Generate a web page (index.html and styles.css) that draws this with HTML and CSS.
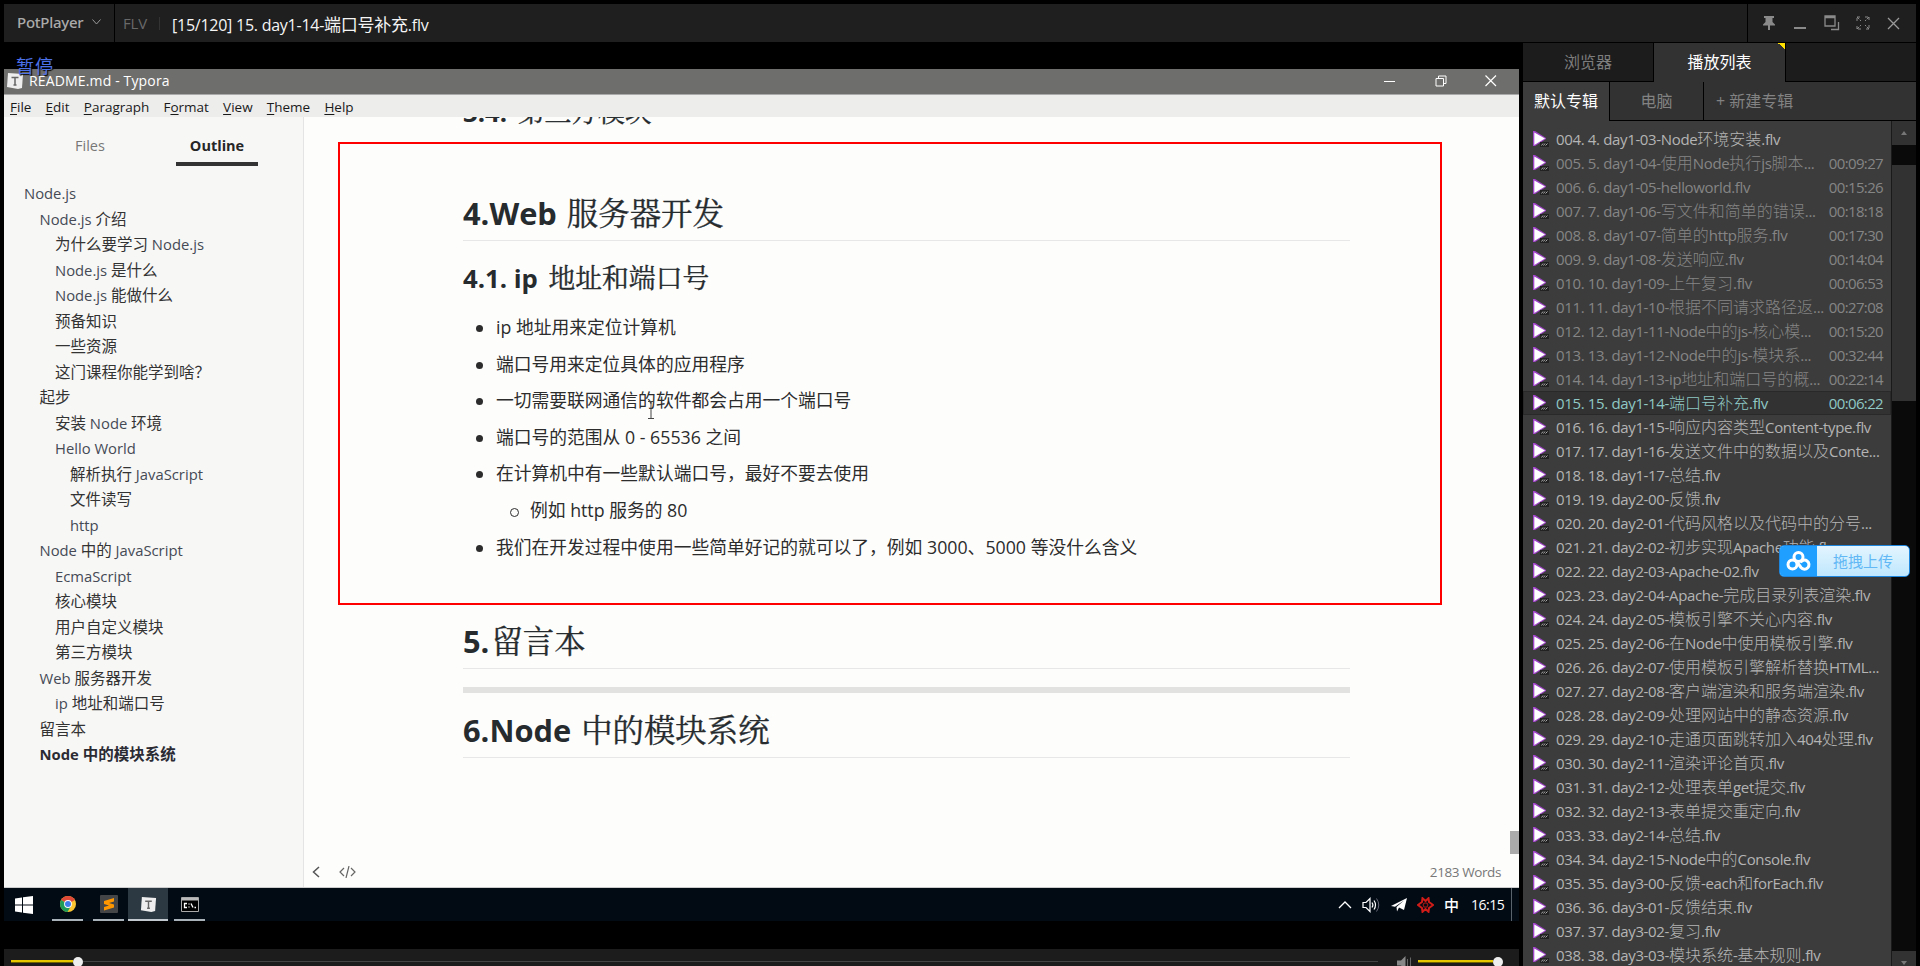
FILE: index.html
```
<!DOCTYPE html>
<html lang="zh-CN">
<head>
<meta charset="utf-8">
<title>PotPlayer</title>
<link rel="stylesheet" href="styles.css">
</head>
<body>
<svg class="defs" width="0" height="0">
  <defs>
    <symbol id="flv" viewBox="0 0 16 16">
      <path d="M0 0H2L13 7V8L2 15H0Z" fill="#a044c8"/>
      <path d="M1.300 1.500L12 7.500L1.300 14Z" fill="#fff"/>
      <path d="M7 11H16V16H7Z" fill="#222"/>
      <path d="M8.500 14.500L10 12.500M10.500 14.500L12 12.500M12.500 14.500L14.500 12.500" stroke="#aaa" fill="none"/>
    </symbol>
    <symbol id="typora" viewBox="0 0 18 18">
      <path d="M2 1L17 2L16 16L12 17L1 15Z" fill="#eee"/>
      <path d="M5.500 5.500H12.500M9 5.500V13M7.500 13H10.500" stroke="#666" stroke-width="1.500" fill="none"/>
    </symbol>
  </defs>
</svg>
<div class="player">
  <header class="titlebar">
    <div class="brand">PotPlayer<svg width="9" height="6" viewBox="0 0 9 6"><path d="M.5.5L4.500 5L8.500.5" fill="none" stroke="#999"/></svg></div>
    <div class="caption"><span class="format">FLV</span><i class="sep"></i><span class="file">[15/120] 15. day1-14-<b class="han">端口号补充</b>.flv</span></div>
    <div class="window-buttons">
      <svg width="14" height="16" viewBox="0 0 14 16"><path d="M2 1H12V3H10.500V7L13 9.500V10.500H8V15H6V10.500H1V9.500L3.500 7V3H2Z" fill="#8a8a8a"/></svg>
      <svg width="14" height="16" viewBox="0 0 14 16"><path d="M1 12H13V14H1Z" fill="#8a8a8a"/></svg>
      <svg width="16" height="16" viewBox="0 0 16 16"><path d="M1 1H11V11H1ZM1 2.500H11M14.500 7V14.500H7" fill="none" stroke="#8a8a8a" stroke-width="1.300"/></svg>
      <svg width="14" height="14" viewBox="0 0 14 14"><path d="M1 5V1H5M1 1L5 5M9 1H13V5M13 1L9 5M13 9V13H9M13 13L9 9M5 13H1V9M1 13L5 9" fill="none" stroke="#8a8a8a" stroke-dasharray="3 1"/></svg>
      <svg width="13" height="13" viewBox="0 0 13 13"><path d="M1 1L12 12M12 1L1 12" fill="none" stroke="#999" stroke-width="1.300"/></svg>
    </div>
  </header>
  <div class="body">
    <main class="stage">
      <div class="osd">暂停</div>
      <section class="video">
        <div class="app-title">
          <svg class="app-icon" width="18" height="18"><use href="#typora"/></svg>
          <span class="app-name">README.md - Typora</span>
          <div class="app-buttons">
            <svg width="12" height="12"><path d="M0 6.500H11" stroke="#fff"/></svg>
            <svg width="12" height="12"><path d="M1 3.500H8.500V11H1ZM3.500 3V1H11V8.500H9" fill="none" stroke="#fff"/></svg>
            <svg width="12" height="12"><path d="M.5.5L11 11M11 .5L.5 11" stroke="#fff" stroke-width="1.200"/></svg>
          </div>
        </div>
        <nav class="menu"><span><u>F</u>ile</span><span><u>E</u>dit</span><span><u>P</u>aragraph</span><span>F<u>o</u>rmat</span><span><u>V</u>iew</span><span><u>T</u>heme</span><span><u>H</u>elp</span></nav>
        <div class="work">
          <aside class="outline">
            <div class="outline-tabs"><span class="o-tab">Files</span><span class="o-tab o-active">Outline</span></div>
            <ul class="tree" id="tree"></ul>
          </aside>
          <article class="editor">
            <div class="doc">
              <h3 class="cut">3.4. <b class="han">第三方模块</b></h3>
              <h2 class="first">4.Web <b class="han">服务器开发</b></h2>
              <h3>4.1. ip <b class="han">地址和端口号</b></h3>
              <ul class="points">
                <li>ip 地址用来定位计算机</li>
                <li>端口号用来定位具体的应用程序</li>
                <li>一切需要联网通信的软件都会占用一个端口号</li>
                <li>端口号的范围从 0 - 65536 之间</li>
                <li>在计算机中有一些默认端口号，最好不要去使用</li>
                <li class="sub">例如 http 服务的 80</li>
                <li>我们在开发过程中使用一些简单好记的就可以了，例如 3000、5000 等没什么含义</li>
              </ul>
              <h2 class="second">5.<b class="han">留言本</b></h2>
              <hr>
              <h2 class="third">6.Node <b class="han">中的模块系统</b></h2>
            </div>
            <footer class="status">
              <svg width="8" height="12"><path d="M7 1L1.500 6L7 11" fill="none" stroke="#555" stroke-width="1.500"/></svg>
              <svg width="17" height="12"><path d="M5 2L1 6L5 10M12 2L16 6L12 10M10 0L7 12" fill="none" stroke="#666" stroke-width="1.200"/></svg>
              <span class="words">2183 Words</span>
            </footer>
            <i class="doc-thumb"></i>
            <svg class="ibeam" width="8" height="18"><path d="M1 .5H7M1 17.500H7M4 .5V17.500" stroke="#444" fill="none"/></svg>
          </article>
        </div>
        <div class="taskbar">
          <div class="task start"><svg width="18" height="18" viewBox="0 0 18 18"><path d="M0 2.500L7 1.500V8.500H0ZM8 1.300L18 0V8.500H8ZM0 9.500H7V16.500L0 15.500ZM8 9.500H18V18L8 16.700Z" fill="#fff"/></svg></div>
          <div class="task open"><svg width="16" height="16" viewBox="0 0 16 16"><circle cx="8" cy="8" r="8" fill="#fbc531"/><path d="M8 8L1.100 4A8 8 0 0 1 14.900 4Z" fill="#df4a38"/><path d="M8 8L1.100 4A8 8 0 0 0 7.500 16L11 10Z" fill="#1f9d58"/><circle cx="8" cy="8" r="3.900" fill="#fff"/><circle cx="8" cy="8" r="3" fill="#3f7ee8"/></svg></div>
          <div class="task open"><svg width="18" height="18" viewBox="0 0 18 18"><rect width="18" height="18" rx="1" fill="#444547"/><path d="M4 6L14 3V6.500L9 8L14 9.500V12.500L4 15.500V12L9 10.500L4 9Z" fill="#ff9800"/></svg></div>
          <div class="task open current"><svg width="17" height="17"><use href="#typora"/></svg></div>
          <div class="task open"><svg width="18" height="15" viewBox="0 0 18 15"><path d="M.5.5H17.500V14.500H.5Z" fill="#000" stroke="#aaa"/><path d="M1 1H17V3.500H1Z" fill="#bbb"/><path d="M6 6.500H3.500V10.500H6M8 6.500V7.500M8 9.500V10.500M10 6.500L12 10.500M13.500 10.500H15" fill="none" stroke="#fff" stroke-width="1.300"/></svg></div>
          <div class="tray">
            <svg width="14" height="8"><path d="M1 7L7 1L13 7" fill="none" stroke="#fff" stroke-width="1.300"/></svg>
            <svg width="19" height="16" viewBox="0 0 19 16"><path d="M1 5.500H4L8 1.500V14.500L4 10.500H1Z" fill="none" stroke="#fff" stroke-width="1.200"/><path d="M10 5.500Q11.800 8 10 10.500M12 3.500Q15 8 12 12.500" fill="none" stroke="#fff" stroke-width="1.200"/><path d="M14.500 1.500Q19 8 14.500 14.500" fill="none" stroke="#667"/></svg>
            <svg width="16" height="14" viewBox="0 0 16 14"><path d="M0 8L16 0L13 12L8 9.500L6 13.500L5.500 9L13 2.500L4 8.800Z" fill="#fff"/></svg>
            <svg width="17" height="16" viewBox="0 0 17 16"><g fill="none" stroke="#d01c18" stroke-width="2"><path d="M8.500 4L11.500 1.200L12 5L16 8L12 11L11.500 14.800L8.500 12L5.500 14.800L5 11L1 8L5 5L5.500 1.200Z"/><circle cx="8.500" cy="8" r="2.200" stroke="#8e1513" stroke-width="1.300"/></g></svg>
            <span class="ime">中</span>
            <span class="clock">16:15</span>
            <i class="peek"></i>
          </div>
        </div>
      </section>
      <div class="controls">
        <div class="seek"><i class="played"></i><i class="knob"></i><i class="rest"></i></div>
        <svg class="speaker" width="15" height="14" viewBox="0 0 15 14"><path d="M0 4.500H4L8.500 0V14L4 9.500H0Z" fill="#888"/><path d="M10.500 3V11M13.500 1.500V13" stroke="#666"/></svg>
        <div class="volume"><i class="played"></i><i class="knob"></i></div>
      </div>
      <div class="mark"></div>
    </main>
    <aside class="playlist">
      <div class="tabs"><span class="tab">浏览器</span><span class="tab tab-on">播放列表</span><span class="tab-fill"></span></div>
      <div class="albums"><span class="album album-on">默认专辑</span><span class="album pc">电脑</span><span class="album add">+ 新建专辑</span></div>
      <div class="list-wrap">
        <div class="list" id="list"></div>
        <div class="scroll"><i class="up"></i><i class="gap"></i><i class="thumb"></i><i class="track"></i><i class="down"></i></div>
      </div>
      <div class="upload">
        <span class="up-icon"><svg width="25" height="20" viewBox="0 0 25 20"><g fill="none" stroke="#fff" stroke-width="3"><circle cx="12.500" cy="6" r="4.500"/><circle cx="6.500" cy="13.500" r="4.500"/><path d="M11 11L15 16.500A4.500 4.500 0 1 0 14.500 11.500"/></g></svg></span>
        <span class="up-text">拖拽上传</span>
      </div>
    </aside>
  </div>
</div>
<script src="app.js"></script>
</body>
</html>
```
FILE: styles.css
```
* { box-sizing: border-box; }
body { margin: 0; background: #000; overflow: hidden; font-family: "Open Sans", "Noto Sans CJK SC", sans-serif; }
i { font-style: normal; display: block; }
ul { list-style: none; margin: 0; padding: 0; }
svg { display: block; flex: none; }
.defs { position: absolute; }
.han { font-weight: inherit; }
.player { width: 1920px; height: 966px; padding: 4px 4px 0; display: flex; flex-direction: column; overflow: hidden; }

.titlebar { height: 38px; display: flex; gap: 1px; flex: none; }
.titlebar > div { background: #1f1f1f; display: flex; align-items: center; }
.brand { width: 110px; padding: 0 0 3px 13px; gap: 9px; color: #aaa; font: 500 15px "Noto Sans", sans-serif; letter-spacing: -0.25px; }
.caption { flex: 1; padding: 0 0 0 8px; color: #f4f4f4; font-size: 16px; white-space: pre; }
.format { color: #696969; width: 28px; font-size: 15px; letter-spacing: -0.2px; }
.sep { width: 1px; height: 13px; background: #333; margin: 0 12px 0 8px; }
.file .han { font-size: 17px; }
.file { letter-spacing: -0.25px; }
.window-buttons { width: 168px; padding: 0 16px 0 14px; justify-content: space-between; }

.body { flex: 1; display: flex; gap: 4px; min-height: 0; }
.stage { width: 1515px; position: relative; padding-top: 27px; flex: none; }
.osd { position: absolute; left: 12px; top: 10px; z-index: 2; color: #4b70e8; font: 18px/26px "Noto Sans CJK SC", sans-serif; letter-spacing: 1px; text-shadow: 1px 1px 1px #000; }
.video { height: 852px; display: flex; flex-direction: column; }
.app-title { height: 26px; background: #6e6e6c; border-bottom: 1px solid #aaa; display: flex; align-items: center; color: #fff; padding: 0 22px 2px 2px; font-size: 14px; flex: none; }
.app-name { flex: 1; padding-left: 5px; letter-spacing: 0.15px; }
.app-buttons { display: flex; gap: 38.500px; }
.menu { height: 22px; background: #ededec; display: flex; align-items: center; gap: 14.200px; padding: 1px 0 0 6px; color: #1a1a1a; font-size: 13.500px; line-height: 20px; flex: none; }
.menu u { text-underline-offset: 2px; }
.work { display: flex; flex: 1; min-height: 0; background: #fdfdfc; border-bottom: 1px solid #ccc; }
.outline { width: 300px; background: #f7f7f6; border-right: 1px solid #e4e4e4; padding-top: 14px; }
.outline-tabs { display: flex; padding-left: 45px; height: 50px; }
.o-tab { width: 82px; height: 35px; text-align: center; line-height: 30px; font-size: 14.500px; color: #777; }
.o-active { margin-left: 45px; color: #262626; font-weight: 700; border-bottom: 4px solid #333; }
.tree li { height: 25.500px; line-height: 25.500px; font-size: 14.800px; color: #454a55; white-space: pre; }
.tree .han { font-size: 15.500px; color: #333; }
.tree .d0 { padding-left: 20px; } .tree .d1 { padding-left: 35.500px; } .tree .d2 { padding-left: 51px; } .tree .d3 { padding-left: 66px; }
.tree .now { color: #2b2b33; font-weight: 700; }
.tree .now .han { font-weight: 700; color: #2b2b33; }
.editor { flex: 1; position: relative; display: flex; flex-direction: column; overflow: hidden; }
.doc { padding-left: 159px; width: 1046px; flex: 1; color: #2c2c2c; min-height: 0; }
h2, h3 { margin: 0; color: #262b2e; font-weight: 700; white-space: pre; }
h2 { font-size: 30.800px; line-height: 42px; height: 50px; border-bottom: 1px solid #e7e7e7; }
h2 .han, h3 .han { font-family: "Noto Serif CJK SC", "Noto Sans CJK SC", serif; font-weight: 400; -webkit-text-stroke: 0.35px #262b2e; }
h2 .han { font-size: 31.400px; margin-left: 2px; }
h3 { font-size: 25.700px; line-height: 32px; height: 36px; }
h3 .han { font-size: 26.800px; margin-left: 4px; }
.cut { margin-top: -24px; height: 32px; line-height: 36px; }
.first { margin: 66px 0 20px; }
.points { padding: 12px 0 0 33px; font-size: 17.770px; line-height: 36.600px; height: 269px; }
.points li { height: 36.600px; position: relative; white-space: pre; }
.points li::before { content: ""; position: absolute; left: -20px; top: 16px; width: 7px; height: 7px; border-radius: 50%; background: #2c2c2c; }
.points .sub { padding-left: 34px; }
.points .sub::before { left: 14px; background: none; border: 1px solid #2c2c2c; }
.second { margin-top: 53px; }
hr { height: 6px; margin: 18px 0 15px; border: 0; background: #e2e2e1; }
.status { height: 30px; display: flex; align-items: center; padding: 0 18px 0 8px; gap: 19px; color: #777; font-size: 13.500px; flex: none; }
.words { margin-left: auto; letter-spacing: -0.4px; }
.doc-thumb { position: absolute; right: 0; top: 714px; width: 9px; height: 23px; background: #ababab; }
.ibeam { position: absolute; left: 343px; top: 284px; }

.taskbar { height: 33px; background: #020b14; display: flex; align-items: stretch; flex: none; }
.task { width: 31px; display: flex; align-items: center; justify-content: center; margin-right: 10px; padding-top: 1px; }
.task.start { width: 40px; margin-right: 8px; }
.open { border-bottom: 2px solid #a9b2b8; }
.current { width: 40px; margin: 0 6px 0 -6px; background: #2d3942; border-color: #c3cacf; }
.tray { margin-left: auto; display: flex; align-items: center; gap: 10px; color: #fff; width: 181px; }
.ime { font: 500 15px "Noto Sans CJK SC", sans-serif; }
.clock { font-size: 14px; letter-spacing: -0.5px; margin-left: 2px; }
.peek { width: 1px; height: 33px; background: #59636b; margin-left: -3px; }

.controls { margin-top: 28px; height: 17px; background: #1c1c1c; display: flex; align-items: flex-start; padding: 7.500px 0 0 7px; }
.seek { width: 1367px; height: 10px; display: flex; align-items: center; }
.played { height: 3px; width: 62px; background: #e6c800; border: solid #6f6200; border-width: 0 0 1px; }
.knob { width: 10px; height: 10px; border-radius: 50%; background: #eee; }
.rest { flex: 1; height: 1px; background: #444; }
.speaker { margin: -1px 0 0 19px; }
.volume { margin-left: 6px; display: flex; align-items: center; height: 10px; }
.volume .played { width: 75px; }
.mark { position: absolute; left: 334px; top: 100px; width: 1104px; height: 463px; border: 2px solid #f00; }

.playlist { width: 393px; position: relative; padding-top: 1px; display: flex; flex-direction: column; }
.tabs { height: 38px; display: flex; gap: 1px; font-size: 16px; flex: none; }
.tab { width: 130px; background: #1c1c1c; color: #7d7d7d; text-align: center; line-height: 38px; }
.tab-on { width: 131px; height: 39px; background: #323232; color: #fff; background-image: linear-gradient(45deg, transparent 50%, #ffe000 50%); background-size: 7px 7px; background-position: right top; background-repeat: no-repeat; }
.tab-fill { flex: 1; background: #1c1c1c; }
.albums { height: 39px; display: flex; margin-top: 1px; flex: none; font-size: 16px; line-height: 39px; color: #828282; gap: 1px; }
.album { height: 38px; background: #323232; text-align: center; }
.album-on { width: 86px; height: 39px; background: #3c3c3c; color: #fff; }
.pc { width: 93px; }
.add { flex: 1; text-align: left; padding-left: 12px; }
.list-wrap { flex: 1; display: flex; min-height: 0; }
.list { width: 368px; background: #3c3c3c; padding-top: 6px; overflow: hidden; flex: none; }
.row { height: 24px; display: flex; align-items: center; padding: 0 7px 0 9px; color: #b4b4b4; font-size: 15px; line-height: 22px; white-space: pre; border: 1px solid transparent; letter-spacing: -0.35px; }
.row svg { margin-right: 7px; }
.row .han { font-size: 16px; font-weight: 300; letter-spacing: 0; }
.row .time { margin-left: auto; letter-spacing: -0.65px; }
.seen { color: #858585; }
.playing { background: #323232; border-color: #292929; color: #8fc8c4; }
.scroll { flex: 1; display: flex; flex-direction: column; background: #0a0a0a; border-left: 1px solid #1a1a1a; }
.up, .down { height: 24px; background: #323232; display: flex; justify-content: center; align-items: center; }
.up::before { content: ""; border: 3px solid transparent; border-top: 0; border-bottom: 4px solid #777; }
.down { height: 15px; align-items: flex-end; padding-bottom: 1px; }
.down::before { content: ""; border: 3px solid transparent; border-bottom: 0; border-top: 4px solid #777; }
.gap { height: 20px; }
.thumb { height: 236px; background: #323232; }
.track { flex: 1; }
.upload { position: absolute; left: 256px; top: 503px; width: 131px; height: 32px; display: flex; border: 1px solid #1e86dd; border-radius: 5px; overflow: hidden; background: linear-gradient(#e3f5ff, #bfe7fd); }
.up-icon { width: 37px; background: #1f9fff; display: flex; align-items: center; justify-content: center; }
.up-text { flex: 1; text-align: center; color: #62b8f5; font-size: 15px; line-height: 31px; }
```
FILE: app.js
```
const han = (s) => s.replace(/[\u3000-\u9fff\uff00-\uffef]+/g, (m) => `<b class="han">${m}</b>`);

const tree = [
  [0, 'Node.js'], [1, 'Node.js 介绍'], [2, '为什么要学习 Node.js'], [2, 'Node.js 是什么'],
  [2, 'Node.js 能做什么'], [2, '预备知识'], [2, '一些资源'], [2, '这门课程你能学到啥？'],
  [1, '起步'], [2, '安装 Node 环境'], [2, 'Hello World'], [3, '解析执行 JavaScript'],
  [3, '文件读写'], [3, 'http'], [1, 'Node 中的 JavaScript'], [2, 'EcmaScript'],
  [2, '核心模块'], [2, '用户自定义模块'], [2, '第三方模块'], [1, 'Web 服务器开发'],
  [2, 'ip 地址和端口号'], [1, '留言本'], [1, 'Node 中的模块系统']
];
document.getElementById('tree').innerHTML = tree.map(([d, t], i) =>
  `<li class="d${d}${i === tree.length - 1 ? ' now' : ''}">${han(t)}</li>`).join('');

const rows = [
  ['day1-03-Node环境安装.flv'],
  ['day1-04-使用Node执行js脚本...', '00:09:27'],
  ['day1-05-helloworld.flv', '00:15:26'],
  ['day1-06-写文件和简单的错误...', '00:18:18'],
  ['day1-07-简单的http服务.flv', '00:17:30'],
  ['day1-08-发送响应.flv', '00:14:04'],
  ['day1-09-上午复习.flv', '00:06:53'],
  ['day1-10-根据不同请求路径返...', '00:27:08'],
  ['day1-11-Node中的js-核心模...', '00:15:20'],
  ['day1-12-Node中的js-模块系...', '00:32:44'],
  ['day1-13-ip地址和端口号的概...', '00:22:14'],
  ['day1-14-端口号补充.flv', '00:06:22'],
  ['day1-15-响应内容类型Content-type.flv'],
  ['day1-16-发送文件中的数据以及Conte...'],
  ['day1-17-总结.flv'],
  ['day2-00-反馈.flv'],
  ['day2-01-代码风格以及代码中的分号...'],
  ['day2-02-初步实现Apache功能.flv'],
  ['day2-03-Apache-02.flv'],
  ['day2-04-Apache-完成目录列表渲染.flv'],
  ['day2-05-模板引擎不关心内容.flv'],
  ['day2-06-在Node中使用模板引擎.flv'],
  ['day2-07-使用模板引擎解析替换HTML...'],
  ['day2-08-客户端渲染和服务端渲染.flv'],
  ['day2-09-处理网站中的静态资源.flv'],
  ['day2-10-走通页面跳转加入404处理.flv'],
  ['day2-11-渲染评论首页.flv'],
  ['day2-12-处理表单get提交.flv'],
  ['day2-13-表单提交重定向.flv'],
  ['day2-14-总结.flv'],
  ['day2-15-Node中的Console.flv'],
  ['day3-00-反馈-each和forEach.flv'],
  ['day3-01-反馈结束.flv'],
  ['day3-02-复习.flv'],
  ['day3-03-模块系统-基本规则.flv']
];
document.getElementById('list').innerHTML = rows.map(([name, time], i) => {
  const n = i + 4;
  const state = n === 15 ? ' playing' : time ? ' seen' : '';
  const label = `${String(n).padStart(3, '0')}. ${n}. ${name}`;
  return `<div class="row${state}"><svg width="16" height="16"><use href="#flv"/></svg><span>${han(label)}</span>${time ? `<span class="time">${time}</span>` : ''}</div>`;
}).join('');
```
